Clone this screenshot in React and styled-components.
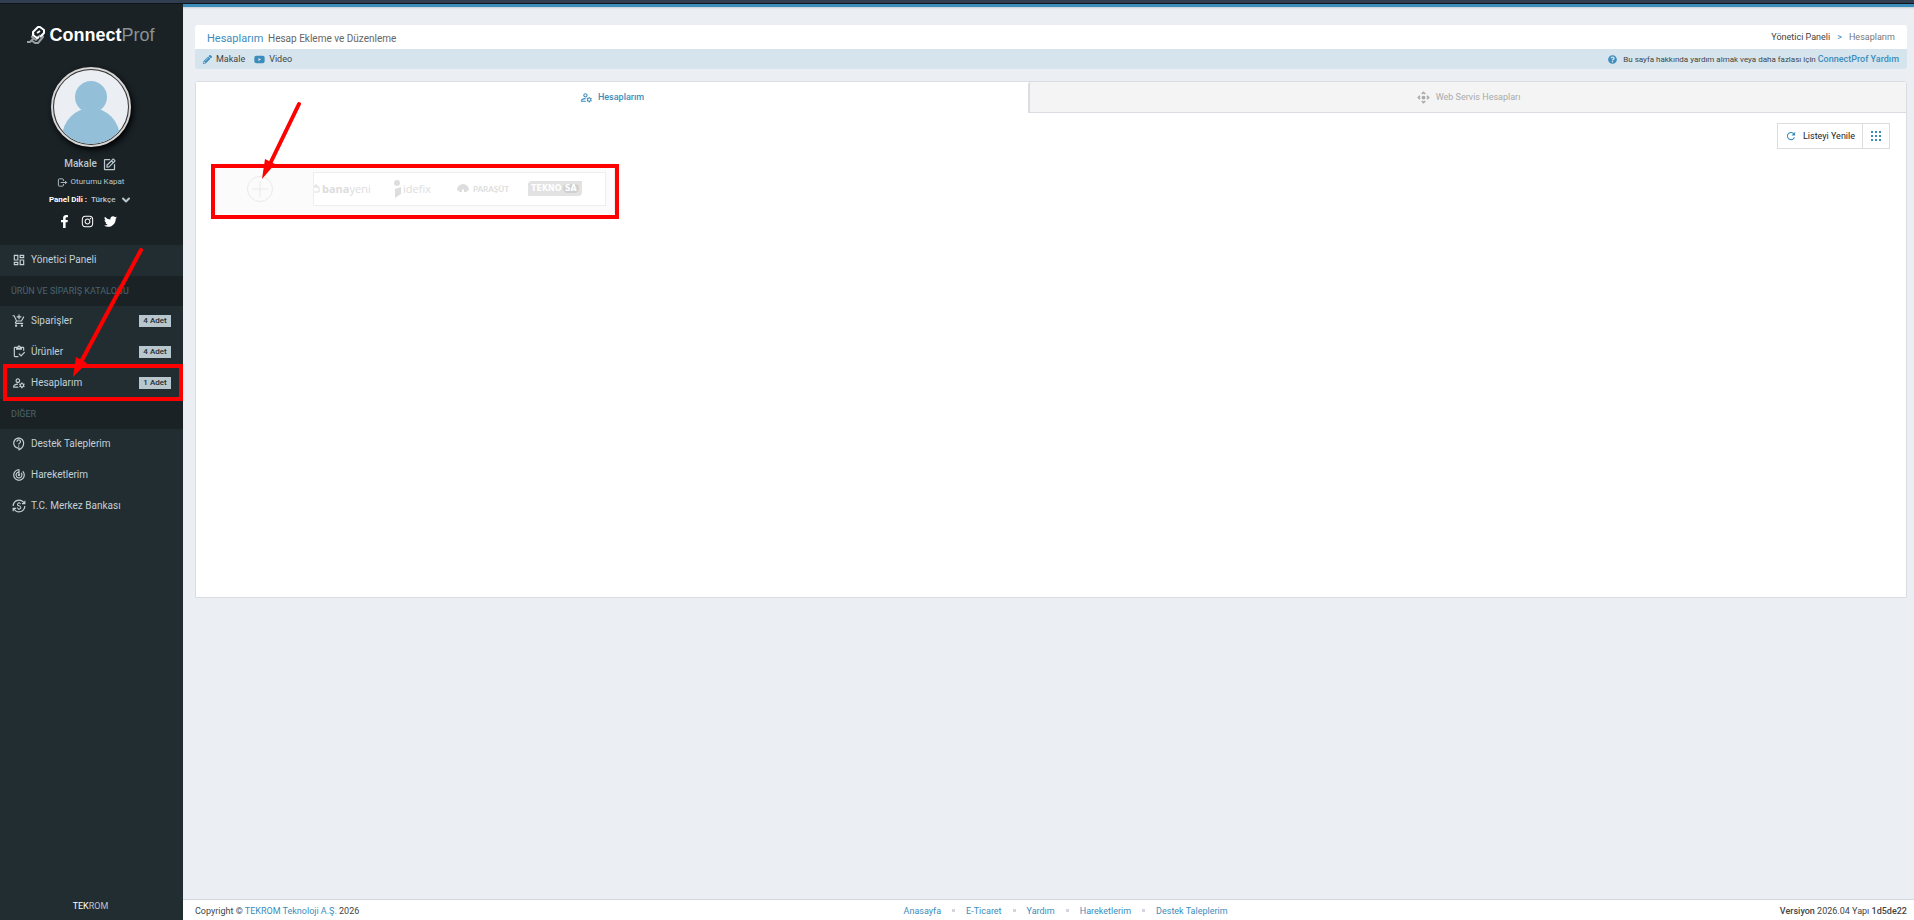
import React from "react";
import styled, { createGlobalStyle, css } from "styled-components";
import {
  MdOutlineDashboard, MdOutlineAddShoppingCart, MdOutlineInventory, MdOutlineManageAccounts,
  MdOutlineContactSupport, MdOutlineTrackChanges, MdOutlineCurrencyExchange, MdControlCamera,
} from "react-icons/md";
import { FaPencilAlt, FaYoutube, FaQuestionCircle, FaFacebookF, FaInstagram, FaTwitter } from "react-icons/fa";
import { FiChevronDown } from "react-icons/fi";
import { BiEdit } from "react-icons/bi";
import { TbLogout } from "react-icons/tb";
import { IoMdRefresh } from "react-icons/io";

const Global = createGlobalStyle`
  *, *::before, *::after { box-sizing: border-box; }
  body { margin: 0; font: 10px/16px Roboto, "Noto Sans", sans-serif; color: #444; background: #ebeff4; }
  a { color: #3c8dbc; text-decoration: none; }
  button, select { font: inherit; }
  svg { display: block; flex: none; }
`;

const Page = styled.div`
  position: relative;
  min-height: 100vh;
  display: flex;
  flex-direction: column;
`;
const TopStrip = styled.div`
  height: 4px;
  background: #313e50;
  border-bottom: 1px solid #10151b;
`;
const Body = styled.div`
  flex: 1;
  display: flex;
`;
const Sidebar = styled.aside`
  flex: 0 0 183px;
  display: flex;
  flex-direction: column;
  background: #222d32;
`;
const Profile = styled.div`
  height: 241px;
  display: flex;
  flex-direction: column;
  align-items: center;
  padding-right: 2px;
  background: #1a2226;
  color: #b8c7ce;
`;
const Logo = styled.a`
  display: flex;
  align-items: center;
  gap: 3px;
  height: 24px;
  margin: 19px 0 20px;
  font: 700 18px/24px "Liberation Sans", Arial, sans-serif;
  color: #fff;
  span { display: flex; }
  em { font-style: normal; font-weight: 400; color: #8b9194; }
`;
const Avatar = styled.div`
  width: 80px;
  height: 80px;
  padding: 1px;
  border: 2px solid #d6d6d6;
  border-radius: 50%;
  background: #333;
  box-shadow: 2px 3px 6px #000;
  svg { border-radius: 50%; background: #ebeff4; }
`;
const UserLine = styled.div`
  display: flex;
  align-items: center;
  gap: ${(p) => p.$gap || 4}px;
  height: 18px;
  margin-top: ${(p) => p.$top || 0}px;
  font-size: ${(p) => p.$size || 8}px;
  font-weight: ${(p) => p.$weight || 400};
  color: #b8c7ce;
  a { display: flex; align-items: center; gap: 3px; color: inherit; }
`;
const LanguageLabel = styled.label`
  color: #fff;
  font-weight: 700;
`;
const LanguagePicker = styled.span`
  display: flex;
  align-items: center;
  gap: 4px;
`;
const LanguageSelect = styled.select`
  appearance: none;
  padding: 0;
  border: 0;
  background: none;
  color: #b8c7ce;
  font-weight: 500;
`;
const Social = styled.div`
  display: flex;
  gap: 10px;
  margin-top: 6px;
  padding-right: 6px;
  a { color: #fff; }
`;
const MenuHeader = styled.h2`
  height: 30px;
  margin: 0;
  padding: 0 11px;
  font-size: 9px;
  font-weight: 400;
  line-height: 30px;
  color: #4b646f;
  background: #1a2226;
`;
const MenuItem = styled.a`
  display: flex;
  align-items: center;
  height: 31px;
  padding: 0 12px 1px;
  gap: 5px;
  font-weight: 400;
  color: #c3d0d6;
`;
const Badge = styled.span`
  width: 32px;
  margin-left: auto;
  font-size: 8px;
  font-weight: 500;
  line-height: 12px;
  text-align: center;
  color: #222d32;
  background: #b8c7ce;
`;
const Brand = styled.div`
  margin-top: auto;
  padding: 0 2px 6px 0;
  text-align: center;
  font-size: 9px;
  color: #b8c7ce;
  b { color: #fff; font-weight: 400; }
`;
const Content = styled.div`
  flex: 1;
  min-width: 0;
  display: flex;
  flex-direction: column;
  border-top: 3px solid #3c8dbc;
`;
const Main = styled.main`
  flex: 1;
  padding: 18px 7px 0 12px;
  box-shadow: inset 0 2px 2px -1px #c9ced6;
`;
const Heading = styled.header`
  display: flex;
  justify-content: space-between;
  align-items: center;
  height: 24px;
  padding: 0 12px;
  border-radius: 3px 3px 0 0;
  background: #fff;
`;
const Title = styled.h1`
  margin: 0;
  padding-top: 3px;
  font-size: 11px;
  font-weight: 400;
  line-height: 20px;
  color: #3c8dbc;
  small { margin-left: 2px; font-size: 10px; color: #666; }
`;
const Breadcrumb = styled.nav`
  display: flex;
  gap: 7px;
  font-size: 9px;
  color: #777;
  a { color: #444; }
  i { font-style: normal; color: #3c8dbc; }
`;
const HelpBar = styled.div`
  display: flex;
  align-items: center;
  gap: 9px;
  height: 20px;
  padding: 0 8px;
  border-radius: 0 0 3px 3px;
  background: #d6e4ed;
  font-size: 9px;
  svg { color: #3c8dbc; }
`;
const HelpItem = styled.a`
  display: flex;
  align-items: center;
  gap: 4px;
  color: #444;
`;
const HelpText = styled.span`
  display: flex;
  align-items: center;
  gap: 6px;
  margin-left: auto;
  font-size: 8px;
  a { font-size: 9px; font-weight: 500; }
`;
const Panel = styled.section`
  min-height: 517px;
  margin-top: 12px;
  border: 1px solid #d9dce0;
  border-radius: 3px 3px 0 0;
  background: #fff;
`;
const Tabs = styled.div`
  display: flex;
`;
const Tab = styled.button`
  flex: ${(p) => (p.$active ? "834 1 0" : "878 1 0")};
  display: flex;
  justify-content: center;
  align-items: center;
  gap: 5px;
  height: 31px;
  padding: 0;
  border: 0;
  border-bottom: 1px solid #fff;
  font-size: 9px;
  ${(p) => p.$active
    ? css`color: #3c8dbc; background: #fff; font-weight: 500;`
    : css`color: #aaa; background: #f4f4f4; border-bottom: 1px solid #d9dce0; border-left: 2px solid #d9dce0; border-radius: 3px 0 0 0;`}
`;
const Toolbar = styled.div`
  display: flex;
  justify-content: flex-end;
  padding: 10px 16px 0;
`;
const ToolButton = styled.button`
  display: flex;
  align-items: center;
  gap: 6px;
  height: 26px;
  padding: 0 7px;
  border: 1px solid #ddd;
  background: #fff;
  color: #222;
  font-size: 9px;
  & + & { margin-left: -1px; padding: 0 8px; }
  svg { color: #3c8dbc; }
`;
const AddAccount = styled.div`
  display: flex;
  align-items: center;
  width: 400px;
  height: 51px;
  margin: 14px 0 0 19px;
  padding: 0 8px 0 32px;
  background: #fbfbfb;
  border-right: 1px solid #eee;
`;
const AddButton = styled.button`
  display: grid;
  place-items: center;
  width: 26px;
  height: 26px;
  padding: 0;
  border: 1px solid #eaeaea;
  border-radius: 50%;
  background: none;
  color: #eaeaea;
`;
const Marketplaces = styled.div`
  display: flex;
  align-items: center;
  flex: 1;
  height: 34px;
  margin-left: 40px;
  border: 1px solid #eee;
  background: #fff;
  overflow: hidden;
  color: #ddd;
`;
const Market = styled.div`
  display: flex;
  align-items: center;
  gap: ${(p) => p.$gap}px;
  width: ${(p) => p.$width}px;
  font: ${(p) => p.$font};
`;
const TeknosaTag = styled.span`
  display: flex;
  align-items: center;
  gap: 1px;
  height: 15px;
  padding: 0 3px;
  border-radius: 4px 0 4px 0;
  background: #e2e2e2;
  color: #fff;
  font: 700 8px/9px "DejaVu Sans", sans-serif;
  b { padding: 0 2px; border-radius: 5px; background: #d0d0d0; }
`;
const Footer = styled.footer`
  display: flex;
  justify-content: space-between;
  align-items: center;
  height: 21px;
  padding: 1px 7px 0 12px;
  border-top: 1px solid #d2d6de;
  background: #fff;
  font-size: 9px;
`;
const FooterLinks = styled.nav`
  display: flex;
  align-items: center;
  gap: 11px;
  padding-right: 8px;
  i { width: 3px; height: 3px; background: #d2d6de; }
`;
const Version = styled.span`
  text-align: right;
  b { font-weight: 500; }
`;
const Annotations = styled.svg`
  position: absolute;
  top: 0;
  left: 0;
  pointer-events: none;
`;

const Item = ({ icon: Icon, count, children }) => (
  <MenuItem href="#"><Icon size={14} />{children}{count && <Badge>{count} Adet</Badge>}</MenuItem>
);

export default function App() {
  return (
    <Page>
      <Global />
      <TopStrip />
      <Body>
        <Sidebar>
          <Profile>
            <Logo href="#">
              <svg width="20" height="20" viewBox="0 0 20 20" fill="none" strokeWidth="2" strokeLinejoin="round">
                <path d="M1 17h3l4-4M8 8l-2 4 4 3 4-5M5 15l4 3h3l5-6-1-3" stroke="#9a9fa1" />
                <path d="M13 12l-2 1-4-3v-3l5-5h2l4 3v3l-4 4M11 8l3-2" stroke="#fff" />
              </svg>
              <span>Connect<em>Prof</em></span>
            </Logo>
            <Avatar>
              <svg width="74" height="74" viewBox="0 0 74 74" fill="#94bfd9">
                <ellipse cx="37" cy="27" rx="16" ry="16" /><ellipse cx="37" cy="68" rx="29" ry="30" />
              </svg>
            </Avatar>
            <UserLine $top={8} $size={10} $weight={500} $gap={5}>Makale <a href="#" aria-label="Düzenle"><BiEdit size={15} /></a></UserLine>
            <UserLine><a href="#"><TbLogout size={11} />Oturumu Kapat</a></UserLine>
            <UserLine><LanguageLabel htmlFor="lang">Panel Dili :</LanguageLabel>
              <LanguagePicker><LanguageSelect id="lang"><option>Türkçe</option></LanguageSelect><FiChevronDown size={12} strokeWidth={4} /></LanguagePicker>
            </UserLine>
            <Social>
              <a href="#" aria-label="Facebook"><FaFacebookF size={13} /></a>
              <a href="#" aria-label="Instagram"><FaInstagram size={13} /></a>
              <a href="#" aria-label="Twitter"><FaTwitter size={13} /></a>
            </Social>
          </Profile>
          <Item icon={MdOutlineDashboard}>Yönetici Paneli</Item>
          <MenuHeader>ÜRÜN VE SİPARİŞ KATALOĞU</MenuHeader>
          <Item icon={MdOutlineAddShoppingCart} count={4}>Siparişler</Item>
          <Item icon={MdOutlineInventory} count={4}>Ürünler</Item>
          <Item icon={MdOutlineManageAccounts} count={1}>Hesaplarım</Item>
          <MenuHeader>DİĞER</MenuHeader>
          <Item icon={MdOutlineContactSupport}>Destek Taleplerim</Item>
          <Item icon={MdOutlineTrackChanges}>Hareketlerim</Item>
          <Item icon={MdOutlineCurrencyExchange}>T.C. Merkez Bankası</Item>
          <Brand><b>TEK</b>ROM</Brand>
        </Sidebar>
        <Content>
          <Main>
            <Heading>
              <Title>Hesaplarım <small>Hesap Ekleme ve Düzenleme</small></Title>
              <Breadcrumb><a href="#">Yönetici Paneli</a><i>&gt;</i><span>Hesaplarım</span></Breadcrumb>
            </Heading>
            <HelpBar>
              <HelpItem href="#"><FaPencilAlt size={9} />Makale</HelpItem>
              <HelpItem href="#"><FaYoutube size={11} />Video</HelpItem>
              <HelpText><FaQuestionCircle size={9} /><span>Bu sayfa hakkında yardım almak veya daha fazlası için <a href="#">ConnectProf Yardım</a></span></HelpText>
            </HelpBar>
            <Panel>
              <Tabs role="tablist">
                <Tab role="tab" aria-selected="true" $active><MdOutlineManageAccounts size={13} />Hesaplarım</Tab>
                <Tab role="tab" aria-selected="false"><MdControlCamera size={15} />Web Servis Hesapları</Tab>
              </Tabs>
              <Toolbar>
                <ToolButton><IoMdRefresh size={12} />Listeyi Yenile</ToolButton>
                <ToolButton aria-label="Görünüm">
                  <svg width="10" height="10" stroke="currentColor" strokeWidth="2" strokeDasharray="2 2"><path d="M0 1h10M0 5h10M0 9h10" /></svg>
                </ToolButton>
              </Toolbar>
              <AddAccount>
                <AddButton aria-label="Hesap Ekle"><svg width="18" height="18" stroke="currentColor"><path d="M9 1v16M1 9h16" /></svg></AddButton>
                <Marketplaces>
                  <Market $width={80} $gap={2} $font={'400 11px/16px "Open Sans", sans-serif'}>
                    <svg width="6" height="9" fill="none" stroke="currentColor"><path d="M0 3h5v5H0M1 3V1h2v2" /></svg><span><b>bana</b>yeni</span>
                  </Market>
                  <Market $width={63} $gap={2} $font={'400 11px/16px "Open Sans", sans-serif'}>
                    <svg width="7" height="18" fill="currentColor"><circle cx="3" cy="3" r="3" /><path d="M1 9l6-2v7l-6 4z" /></svg>idefix
                  </Market>
                  <Market $width={71} $gap={4} $font={'700 8px/16px Lato, sans-serif'}>
                    <svg width="12" height="9" fill="currentColor"><path d="M0 6a6 6 0 1 1 12 0l-3 2H7V6L6 5 5 6v2H3z" /></svg>PARAŞÜT
                  </Market>
                  <TeknosaTag>TEKNO<b>SA</b></TeknosaTag>
                </Marketplaces>
              </AddAccount>
            </Panel>
          </Main>
          <Footer>
            <span>Copyright © <a href="#">TEKROM Teknoloji A.Ş.</a> 2026</span>
            <FooterLinks>
              <a href="#">Anasayfa</a><i /><a href="#">E-Ticaret</a><i /><a href="#">Yardım</a><i /><a href="#">Hareketlerim</a><i /><a href="#">Destek Taleplerim</a>
            </FooterLinks>
            <Version><b>Versiyon</b> 2026.04 Yapı <b>1d5de22</b></Version>
          </Footer>
        </Content>
      </Body>
      <Annotations width="640" height="420" fill="none" stroke="#f00" strokeWidth="4">
        <rect x="213" y="166" width="404" height="51" />
        <rect x="5" y="366" width="176" height="33" />
        <path d="M299 104L268 168M141 250L81 362" strokeLinecap="round" />
        <path d="M262 179l3-20 10 5zM73 377l3-20 11 6z" fill="#f00" stroke="none" />
      </Annotations>
    </Page>
  );
}
